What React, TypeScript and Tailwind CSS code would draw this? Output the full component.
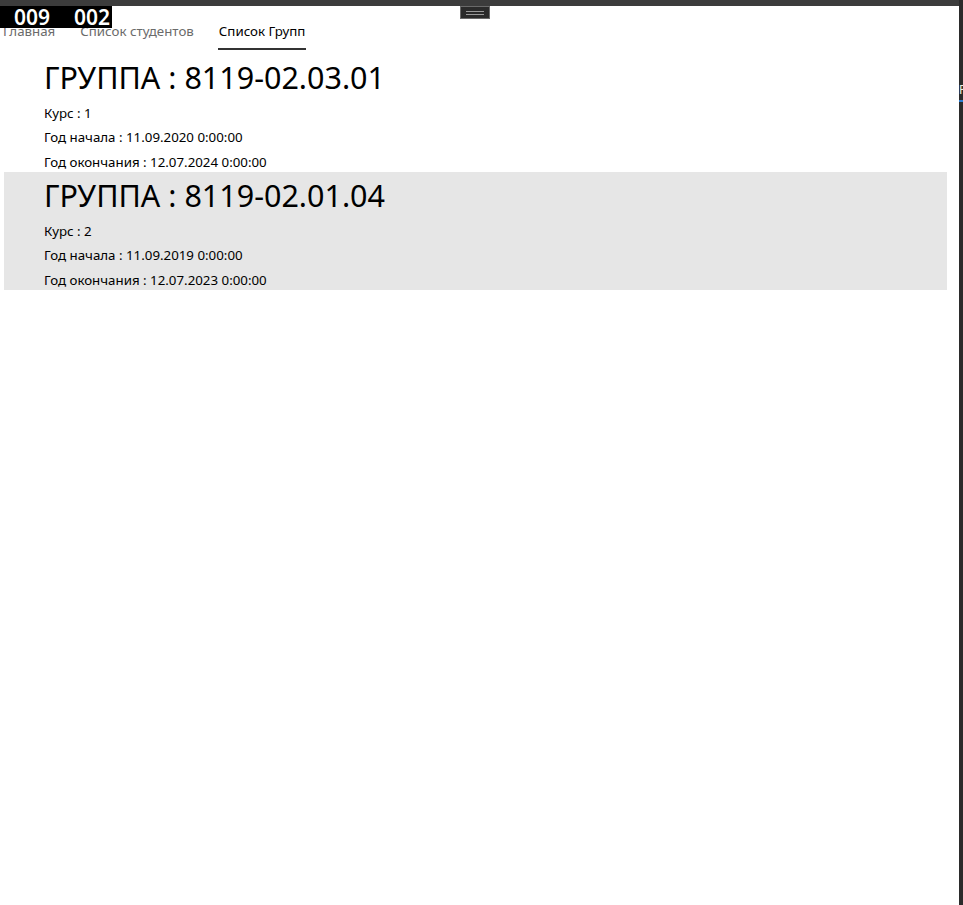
import React from 'react';

interface Group {
  name: string;
  course: number;
  start: string;
  end: string;
}

const groups: Group[] = [
  { name: '8119-02.03.01', course: 1, start: '11.09.2020 0:00:00', end: '12.07.2024 0:00:00' },
  { name: '8119-02.01.04', course: 2, start: '11.09.2019 0:00:00', end: '12.07.2023 0:00:00' },
];

const tabs = [
  { title: 'Главная', cls: 'ml-[3px]' },
  { title: 'Список студентов', cls: 'ml-[25px]' },
  { title: 'Список Групп', cls: 'ml-[25px]' },
];

const GroupItem: React.FC<{ group: Group; selected: boolean }> = ({ group, selected }) => (
  <div className={`pl-[40px] ${selected ? 'bg-[#e6e6e6]' : ''}`}>
    <div className="h-[46px] leading-[46px] text-[30.5px] text-black">ГРУППА : {group.name}</div>
    <div className="h-[24px] leading-[26px] text-[13.3px] text-black">Курс : {group.course}</div>
    <div className="h-[25px] leading-[27px] text-[13.3px] text-black">Год начала : {group.start}</div>
    <div className="h-[23px] leading-[27px] text-[13.3px] text-black">Год окончания : {group.end}</div>
  </div>
);

export default function App() {
  return (
    <div className="relative flex h-[905px] w-[963px] overflow-hidden bg-white" style={{ fontFamily: '"Noto Sans", "Open Sans", sans-serif' }}>
      <div className="flex flex-1 flex-col">
        <div className="h-[6px] bg-[#3c3c3c]" />
        {/* tabs */}
        <div className="flex h-[44px] items-end">
          {tabs.map((t, i) => (
            <div key={t.title} className={`flex flex-col ${t.cls}`}>
              <span className={`text-[13.3px] leading-[20px] ${i === 2 ? 'text-black' : 'text-[#6b6b6b]'}`}>{t.title}</span>
              <div className={`mt-[7px] h-[2px] ${i === 2 ? '-mx-px bg-[#333333]' : 'bg-transparent'}`} />
            </div>
          ))}
        </div>
        <div className="mr-[12px] ml-[4px] mt-[4px] flex flex-col">
          {groups.map((g, i) => (
            <GroupItem key={g.name} group={g} selected={i === 1} />
          ))}
        </div>
      </div>
      <div className="relative w-[4px] bg-[#2b2b2b]">
        <span className="absolute left-0 top-[84px] text-[12px] leading-none text-[#f0f0e0]">P</span>
        <div className="absolute left-0 top-[100px] h-[2px] w-[4px] bg-[#2d7dd2]" />
      </div>

      {/* debug counter overlay */}
      <div className="absolute left-0 top-[6px] flex h-[22px] w-[112px] items-center gap-[24px] bg-black pl-[14px] text-[21px] font-semibold leading-none text-white">
        <span>009</span>
        <span>002</span>
      </div>
      {/* handle */}
      <div className="absolute left-[460px] top-[6px] flex h-[13px] w-[30px] flex-col items-center justify-center gap-[2px] border border-[#6a6a6a] bg-[#2b2b2b]">
        <div className="h-px w-[18px] bg-[#9a9a9a]" />
        <div className="h-px w-[18px] bg-[#9a9a9a]" />
      </div>
    </div>
  );
}
